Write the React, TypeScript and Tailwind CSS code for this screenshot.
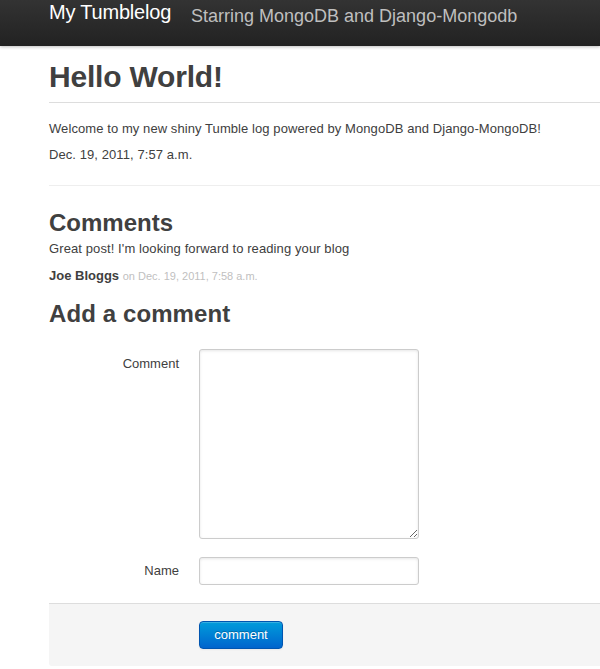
import React from "react";

export default function App() {
  return (
    <div
      className="w-full min-h-[669px] overflow-hidden bg-white text-[#404040]"
      style={{ fontFamily: '"Liberation Sans", Arial, Helvetica, sans-serif' }}
    >
      {/* Top bar */}
      <div className="relative z-10 h-[46px] bg-gradient-to-b from-[#333333] to-[#222222] shadow-[0_1px_3px_rgba(0,0,0,0.25)] flex items-start pl-[49px]">
        <div className="w-[142px] shrink-0 mt-[2px] text-[20px] leading-[20px] text-white tracking-[-0.2px]">
          My Tumblelog
        </div>
        <div className="mt-[7px] text-[18px] leading-[18px] text-[#bfbfbf] whitespace-nowrap">
          Starring MongoDB and Django-Mongodb
        </div>
      </div>

      {/* Content */}
      <div className="pl-[49px]">
        <div className="mt-[13px] pb-[7px] border-b border-[#dddddd]">
          <h1 className="text-[30px] leading-[36px] font-bold text-[#404040] tracking-[-0.2px]">Hello World!</h1>
        </div>

        <p className="mt-[17px] text-[13px] leading-[18px] tracking-[0.08px]">
          Welcome to my new shiny Tumble log powered by MongoDB and Django-MongoDB!
        </p>
        <p className="mt-[8px] text-[13px] leading-[18px] tracking-[0.08px]">Dec. 19, 2011, 7:57 a.m.</p>

        <div className="mt-[21px] border-t border-[#eeeeee]" />

        <h2 className="mt-[23px] text-[24px] leading-[28px] font-bold">Comments</h2>
        <p className="mt-[3px] text-[13px] leading-[18px] tracking-[0.1px]">
          Great post! I&apos;m looking forward to reading your blog
        </p>
        <p className="mt-[9px] text-[13px] leading-[18px]">
          <strong className="font-bold">Joe Bloggs</strong>{" "}
          <span className="text-[11px] text-[#bfbfbf]">on Dec. 19, 2011, 7:58 a.m.</span>
        </p>

        <h2 className="mt-[15px] text-[24px] leading-[28px] font-bold tracking-[0.1px]">Add a comment</h2>

        <form className="mt-[21px]" onSubmit={(e) => e.preventDefault()}>
          <div className="flex items-start">
            <label className="w-[130px] shrink-0 pt-[6px] text-right text-[13px] leading-[18px]">
              Comment
            </label>
            <textarea
              className="ml-[20px] w-[220px] h-[190px] border border-[#cccccc] rounded-[3px] shadow-[inset_0_1px_3px_rgba(0,0,0,0.1)] bg-white outline-none"
            />
          </div>

          <div className="mt-[18px] flex items-start">
            <label className="w-[130px] shrink-0 pt-[5px] text-right text-[13px] leading-[18px]">
              Name
            </label>
            <input
              type="text"
              className="ml-[20px] w-[220px] h-[28px] border border-[#cccccc] rounded-[3px] shadow-[inset_0_1px_3px_rgba(0,0,0,0.1)] bg-white outline-none"
            />
          </div>

          <div className="mt-[18px] border-t border-[#dddddd] bg-[#f5f5f5] rounded-bl-[3px] pt-[17px] pb-[17px] pl-[150px]">
            <button
              type="submit"
              className="w-[84px] h-[28px] rounded-[4px] border border-[#0055b0] bg-gradient-to-b from-[#049cdb] to-[#0064cd] text-white text-[13px] leading-[18px] [text-shadow:0_-1px_0_rgba(0,0,0,0.25)] shadow-[inset_0_1px_0_rgba(255,255,255,0.2),0_1px_2px_rgba(0,0,0,0.05)]"
            >
              comment
            </button>
          </div>
        </form>
      </div>
    </div>
  );
}
